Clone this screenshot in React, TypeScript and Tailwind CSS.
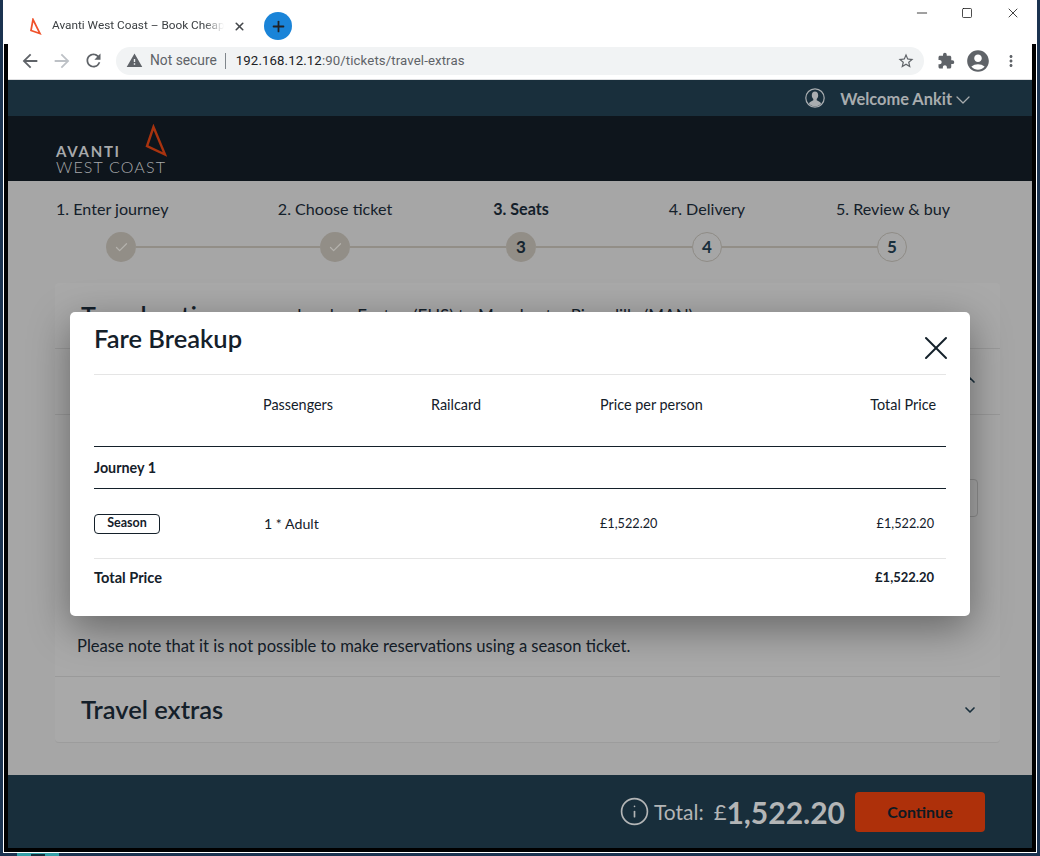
import { Check, ChevronDown, ChevronUp, X, Plus, Minus, Square, Info } from 'lucide-react';
import {
  MdArrowBack,
  MdArrowForward,
  MdRefresh,
  MdWarning,
  MdStarBorder,
  MdExtension,
  MdAccountCircle,
  MdMoreVert,
} from 'react-icons/md';

const siteFont = "font-['Lato',sans-serif]";
const chromeFont = "font-['Roboto',sans-serif]";

function TabStrip() {
  return (
    <div className={`flex h-[44px] items-center pt-[8px] ${chromeFont}`}>
      <svg width="12" height="17" viewBox="0 0 12 17" className="ml-[26px] mt-[1px]" fill="none">
        <path d="M3 1.5 1 12.5 10 15.5Z" stroke="#f0512a" strokeWidth="1.7" />
      </svg>
      <div className="ml-[10px] w-[172px] overflow-hidden whitespace-nowrap text-[11.8px] text-[#3c4043] [mask-image:linear-gradient(to_right,black_88%,transparent)]">
        Avanti West Coast – Book Cheap
      </div>
      <X className="ml-[9px] h-[13px] w-[13px] text-[#45484c]" strokeWidth={3} />
      <div className="ml-[18px] flex h-[28px] w-[28px] items-center justify-center rounded-full bg-[#1a84d8]">
        <Plus className="h-[17px] w-[17px] text-[#202124]" strokeWidth={2.5} />
      </div>
      <div className="ml-auto flex -translate-y-[13px] items-center pr-[15px]">
        <Minus className="h-[16px] w-[16px] text-[#111]" strokeWidth={1.2} />
        <Square className="ml-[31px] h-[12px] w-[12px] text-[#111]" strokeWidth={1.5} />
        <X className="ml-[32px] h-[16px] w-[16px] text-[#111]" strokeWidth={1.2} />
      </div>
    </div>
  );
}

function Toolbar() {
  return (
    <div className={`flex h-[36px] items-center border-b border-[#dedfe1] bg-white pb-[2px] ${chromeFont}`}>
      <MdArrowBack className="ml-[11px] text-[#5f6368]" size={22} />
      <MdArrowForward className="ml-[10px] text-[#bdc1c6]" size={22} />
      <MdRefresh className="ml-[10px] text-[#5f6368]" size={21} />
      <div className="ml-[12px] flex h-[28px] w-[808px] items-center rounded-full bg-[#f1f3f4]">
        <MdWarning className="ml-[10px] text-[#5f6368]" size={17} />
        <span className="ml-[7px] text-[13.8px] text-[#5f6368]">Not secure</span>
        <span className="ml-[8px] h-[16px] w-px bg-[#80868b]" />
        <span className="ml-[10px] text-[13.2px] tracking-[0.12px] text-[#202124]">
          192.168.12.12<span className="text-[#5f6368]">:90/tickets/travel-extras</span>
        </span>
        <MdStarBorder className="ml-auto mr-[9px] text-[#5f6368]" size={18} />
      </div>
      <MdExtension className="ml-[13px] text-[#5f6368]" size={18} />
      <MdAccountCircle className="ml-[10px] text-[#5f6368]" size={26} />
      <MdMoreVert className="ml-[11px] text-[#5f6368]" size={18} />
    </div>
  );
}

function UserIcon() {
  return (
    <svg width="20" height="20" viewBox="0 0 20 20" fill="none">
      <circle cx="10" cy="10" r="9.2" stroke="#a9adb0" strokeWidth="1.2" />
      <path
        d="M10 3.6c2 0 3.2 1.6 3.2 3.7 0 1.6-.7 3-1.5 3.7v1.3l3.6 2 .8 1.8A9 9 0 0 1 3.9 16.1l.8-1.8 3.6-2V11c-.8-.7-1.5-2.1-1.5-3.7 0-2.1 1.2-3.7 3.2-3.7Z"
        fill="#a9adb0"
      />
    </svg>
  );
}

function TopBars() {
  return (
    <>
      <div className="flex h-[36px] items-center justify-end bg-[#192f3c] pr-[57px]">
        <UserIcon />
        <span className="ml-[15px] mt-[2px] text-[16.4px] font-bold text-[#a8acae]">Welcome Ankit</span>
        <ChevronDown className="-ml-[1px] mt-[4px] h-[24px] w-[24px] text-[#a8acae]" strokeWidth={1.3} />
      </div>
      <div className="h-[65px] bg-[#0e151c] pl-[48px] pt-[26px]">
        <div className="relative w-[110px] text-[#a7a9ab]">
          <div className="text-[15px] font-bold leading-[18px] tracking-[1.7px]">AVANTI</div>
          <div className="-mt-[2px] whitespace-nowrap text-[16px] font-light leading-[18px] tracking-[1.15px]">
            WEST COAST
          </div>
          <svg width="22" height="33" viewBox="0 0 22 33" className="absolute -top-[18px] left-[89px]" fill="none">
            <path d="M8.5 3 2 22 20 30.5Z" stroke="#a8330f" strokeWidth="2.4" />
          </svg>
        </div>
      </div>
    </>
  );
}

function DoneCircle() {
  return (
    <div className="flex h-[30px] w-[30px] shrink-0 items-center justify-center rounded-full bg-[#928e87]">
      <Check className="h-[15px] w-[15px] text-[#b4b2ad]" strokeWidth={2} />
    </div>
  );
}

function NumberCircle({ n, active }: { n: number; active?: boolean }) {
  return (
    <div
      className={
        active
          ? 'flex h-[30px] w-[30px] shrink-0 items-center justify-center rounded-full bg-[#928e87] text-[17px] font-bold text-[#15242e]'
          : 'flex h-[30px] w-[30px] shrink-0 items-center justify-center rounded-full border border-[#8f8c86] bg-[#a6a6a6] text-[17px] font-bold text-[#192f3c]'
      }>
      {n}
    </div>
  );
}

function Stepper() {
  const line = 'h-[2px] bg-[#928e87]';
  return (
    <div className="pt-[18px] text-[#14202a]">
      <div className="ml-[48px] grid w-[930px] grid-cols-5 text-[16.1px] leading-[20px]">
        <div>1. Enter journey</div>
        <div className="text-center">2. Choose ticket</div>
        <div className="text-center font-bold">3. Seats</div>
        <div className="text-center">4. Delivery</div>
        <div className="text-center">5. Review &amp; buy</div>
      </div>
      <div className="ml-[98px] mt-[13px] flex items-center">
        <DoneCircle />
        <div className={`${line} w-[184px]`} />
        <DoneCircle />
        <div className={`${line} w-[156px]`} />
        <NumberCircle n={3} active />
        <div className={`${line} w-[156px]`} />
        <NumberCircle n={4} />
        <div className={`${line} w-[155px]`} />
        <NumberCircle n={5} />
      </div>
    </div>
  );
}

function JourneyCard() {
  return (
    <div className="ml-[47px] mt-[21px] w-[945px] rounded-[4px] border-b border-[#9c9c9c] bg-[#a9a9a9] text-[#14202a]">
      <div className="flex h-[66px] items-start border-b border-[#9a9a9a] pl-[26px] pt-[17px]">
        <span className="text-[25px] font-semibold leading-[30px]">Travel options</span>
        <span className="ml-[61px] mt-[4px] text-[17px] leading-[24px]">London Euston (EUS) to Manchester Piccadilly (MAN)</span>
      </div>
      <div className="flex h-[66px] items-start justify-end border-b border-[#9a9a9a] pr-[22px] pt-[23px]">
        <ChevronUp className="h-[16px] w-[16px] text-[#192f3c]" strokeWidth={2.5} />
      </div>
      <div className="h-[262px] border-b border-[#9a9a9a] px-[22px] pt-[64px]">
        <div className="ml-auto h-[38px] w-[300px] rounded-[4px] border border-[#8e8e8e]" />
        <p className="mt-[117px] whitespace-nowrap text-[16.6px] leading-[24px]">
          Please note that it is not possible to make reservations using a season ticket.
        </p>
      </div>
      <div className="flex h-[65px] items-center justify-between pl-[26px] pr-[22px]">
        <span className="text-[25.5px] font-semibold">Travel extras</span>
        <ChevronDown className="h-[16px] w-[16px] text-[#192f3c]" strokeWidth={2.5} />
      </div>
    </div>
  );
}

function Footer() {
  return (
    <div className="flex h-[73px] items-center justify-end bg-[#182e3b] pr-[47px] text-[#b3b5b6]">
      <Info className="h-[31px] w-[31px]" strokeWidth={1.3} />
      <span className="ml-[4px] text-[21px] leading-none">Total:</span>
      <span className="ml-[10px] text-[22px] leading-none">£</span>
      <span className="text-[30px] font-bold leading-none">1,522.20</span>
      <button
        type="button"
        className="ml-[10px] h-[40px] w-[130px] rounded-[4px] bg-[#ae300a] text-[16px] font-bold text-[#0e1a22]">
        Continue
      </button>
    </div>
  );
}

function FareBreakupModal() {
  const cols = 'grid grid-cols-[169px_168px_169px_1fr] items-center';
  return (
    <div className="absolute left-[62px] top-[131px] h-[304px] w-[900px] rounded-[5px] bg-white px-[24px] text-[#14202a] shadow-[0_12px_40px_rgba(0,0,0,0.4)]">
      <div className="flex h-[63px] items-start justify-between border-b border-[#e5e5e5]">
        <h2 className="mt-[11px] text-[25.5px] font-semibold leading-[30px]">Fare Breakup</h2>
        <X className="-mr-[10px] mt-[16px] h-[40px] w-[40px]" strokeWidth={1.2} />
      </div>
      <div className={`${cols} h-[72px] border-b border-[#14202a] pb-[11px] text-[14.4px]`}>
        <span />
        <span>Passengers</span>
        <span>Railcard</span>
        <span className="flex justify-between pr-[10px]">
          <span>Price per person</span>
          <span>Total Price</span>
        </span>
      </div>
      <div className="flex h-[42px] items-center border-b border-[#14202a] text-[14.3px] font-bold">Journey 1</div>
      <div className={`${cols} h-[70px] border-b border-[#e5e5e5] text-[14.2px]`}>
        <span className="flex h-[20px] w-[66px] items-center justify-center rounded-[4px] border border-[#14202a] text-[12.5px] font-bold">
          Season
        </span>
        <span className="pl-px">1 * Adult</span>
        <span />
        <span className="flex justify-between pr-[12px] text-[12.7px]">
          <span>£1,522.20</span>
          <span>£1,522.20</span>
        </span>
      </div>
      <div className="flex h-[37px] items-center justify-between pr-[12px] font-bold">
        <span className="text-[14.6px]">Total Price</span>
        <span className="text-[13px]">£1,522.20</span>
      </div>
    </div>
  );
}

export default function App() {
  return (
    <div className="h-[856px] w-[1040px] overflow-hidden bg-[#1b3350] pl-[3px]">
      <div className={`h-[853px] w-[1034px] border-x border-b border-white bg-white ${siteFont}`}>
        <TabStrip />
        <div className="h-[808px] w-[1032px] border-x-4 border-b-4 border-black">
          <Toolbar />
          <TopBars />
          <div className="relative h-[594px] bg-[#a6a6a6]">
            <Stepper />
            <JourneyCard />
            <FareBreakupModal />
          </div>
          <Footer />
        </div>
      </div>
      <div className="ml-[14px] flex h-[3px] w-[42px] justify-center bg-[#35a0a8]">
        <div className="mt-[1px] h-[2px] w-[14px] bg-[#12303c]" />
      </div>
    </div>
  );
}
